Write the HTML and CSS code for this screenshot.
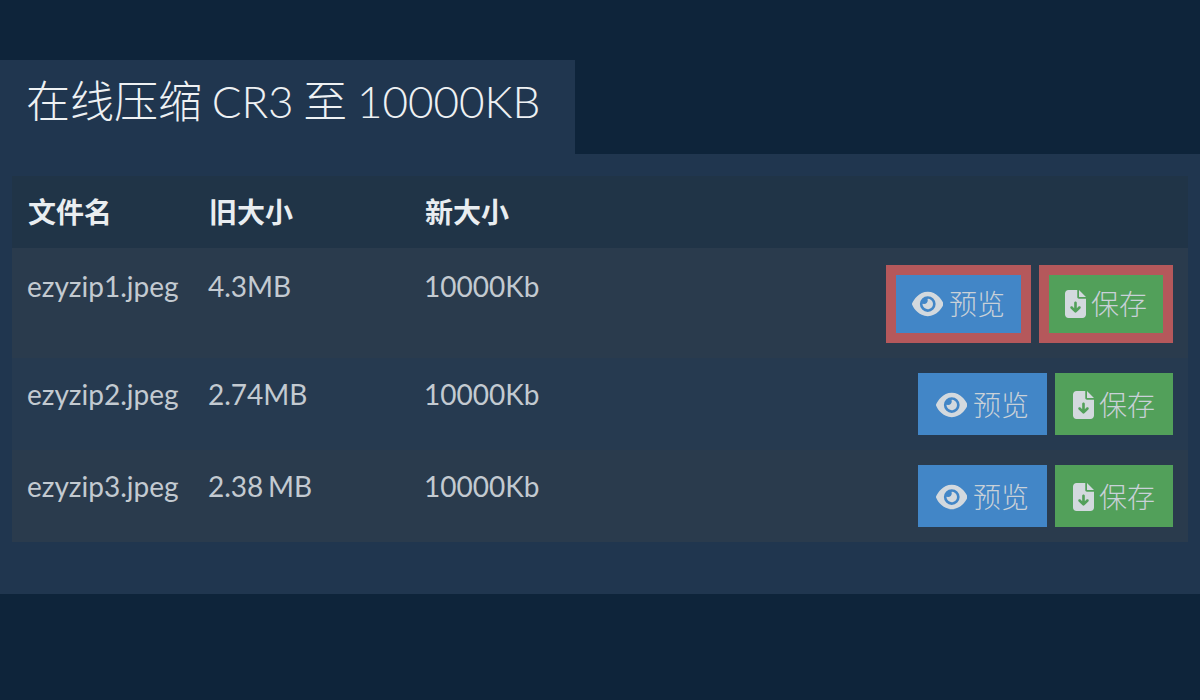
FILE: index.html
```html
<!DOCTYPE html>
<html lang="zh-CN">
<head>
<meta charset="utf-8">
<title>在线压缩 CR3 至 10000KB</title>
<link rel="stylesheet" href="styles.css">
</head>
<body>
<svg class="defs" width="0" height="0" aria-hidden="true">
  <symbol id="i-eye" viewBox="0 0 576 512"><path fill="currentColor" d="M288 32c-80.8 0-145.5 36.8-192.6 80.6C48.6 156 17.3 208 2.5 243.7c-3.3 7.9-3.3 16.7 0 24.6C17.3 304 48.6 356 95.4 399.4C142.5 443.2 207.2 480 288 480s145.5-36.8 192.6-80.6c46.8-43.5 78.1-95.4 93-131.1c3.3-7.9 3.3-16.7 0-24.6c-14.9-35.7-46.2-87.7-93-131.1C433.5 68.8 368.8 32 288 32zM144 256a144 144 0 1 1 288 0 144 144 0 1 1 -288 0zm144-64c0 35.3-28.7 64-64 64c-7.1 0-13.9-1.2-20.3-3.3c-5.5-1.8-11.9 1.6-11.7 7.4c.3 6.9 1.3 13.8 3.2 20.7c13.7 51.2 66.4 81.6 117.6 67.9s81.6-66.4 67.9-117.6c-11.1-41.5-47.8-69.4-88.6-71.1c-5.8-.2-9.2 6.1-7.4 11.7c2.1 6.4 3.3 13.2 3.3 20.3z"/></symbol>
  <symbol id="i-file" viewBox="0 0 384 512"><path fill="currentColor" d="M64 0C28.7 0 0 28.7 0 64V448c0 35.3 28.7 64 64 64H320c35.3 0 64-28.7 64-64V160H256c-17.7 0-32-14.3-32-32V0H64zM256 0V128H384L256 0zM216 232V334.1l31-31c9.4-9.4 24.6-9.4 33.9 0s9.4 24.6 0 33.9l-72 72c-9.4 9.4-24.6 9.4-33.9 0l-72-72c-9.4-9.4-9.4-24.6 0-33.9s24.6-9.4 33.9 0l31 31V232c0-13.3 10.7-24 24-24s24 10.7 24 24z"/></symbol>
</svg>
<main class="page">
  <h1 class="title">在线压缩 CR3 至 10000KB</h1>
  <section class="panel">
    <div class="files">
      <div class="row head">
        <div class="c1">文件名</div><div class="c2">旧大小</div><div class="c3">新大小</div>
      </div>
      <div class="row first odd">
        <div class="c1">ezyzip1.jpeg</div><div class="c2">4.3MB</div><div class="c3">10000Kb</div>
        <div class="actions">
          <a class="btn blue marked"><svg class="ic eye"><use href="#i-eye"/></svg>预览</a>
          <a class="btn green marked"><svg class="ic file"><use href="#i-file"/></svg>保存</a>
        </div>
      </div>
      <div class="row">
        <div class="c1">ezyzip2.jpeg</div><div class="c2">2.74MB</div><div class="c3">10000Kb</div>
        <div class="actions">
          <a class="btn blue"><svg class="ic eye"><use href="#i-eye"/></svg>预览</a>
          <a class="btn green"><svg class="ic file"><use href="#i-file"/></svg>保存</a>
        </div>
      </div>
      <div class="row odd">
        <div class="c1">ezyzip3.jpeg</div><div class="c2">2.38 MB</div><div class="c3">10000Kb</div>
        <div class="actions">
          <a class="btn blue"><svg class="ic eye"><use href="#i-eye"/></svg>预览</a>
          <a class="btn green"><svg class="ic file"><use href="#i-file"/></svg>保存</a>
        </div>
      </div>
    </div>
  </section>
</main>
</body>
</html>
```
FILE: styles.css
```css
* { box-sizing: border-box; }
html, body { margin: 0; height: 100%; }
body {
  background: #0e243a;
  color: #c3cad1;
  font-family: Lato, "Noto Sans CJK SC", sans-serif;
  font-size: 28px;
  word-spacing: -2.5px;
  overflow: hidden;
}
.defs { display: block; height: 0; }
.page { padding-top: 60px; }
.title {
  width: 575px;
  height: 94px;
  margin: 0;
  padding: 9px 0 0 26px;
  background: #20364f;
  color: #eef1f3;
  font-size: 44px;
  font-weight: 300;
  line-height: 64px;
  word-spacing: -2.3px;
  white-space: nowrap;
}
.panel {
  height: 440px;
  padding: 22px 12px 0;
  background: #20364f;
}
.row {
  display: flex;
  align-items: flex-start;
  padding: 0 15px;
  background: #263a50;
}
.row.odd { background: #2a3b4d; }
.head {
  height: 72px;
  background: #203447;
  color: #e9edf0;
  font-weight: 700;
  line-height: 72px;
}
.row:not(.head) { height: 92px; padding-top: 20px; line-height: 32px; }
.row.first { height: 110px; padding-top: 22px; }
.c1 { width: 181px; flex: none; }
.c2 { width: 217px; flex: none; margin-right: -1px; }
.c3 { flex: none; }
.head .c1 { padding-left: 1px; }
.head .c2 { padding-left: 1px; margin-right: 0; }
.actions {
  display: flex;
  gap: 8px;
  margin-left: auto;
  margin-top: -5px;
}
.first .actions { margin-top: -5px; }
.btn {
  display: flex;
  align-items: center;
  height: 62px;
  padding: 1px 18px 0;
  color: #c9d1d8;
  font-size: 28px;
  font-weight: 300;
  white-space: nowrap;
}
.blue { background: #4286c7; }
.green { background: #52a05a; }
.marked {
  height: 78px;
  padding: 0 16px;
  border: 10px solid #b5585b;
}
.ic { flex: none; height: 28px; color: #d3d9de; }
.eye { width: 31.5px; margin-right: 5.5px; }
.file { width: 21px; margin-right: 5px; }
```
